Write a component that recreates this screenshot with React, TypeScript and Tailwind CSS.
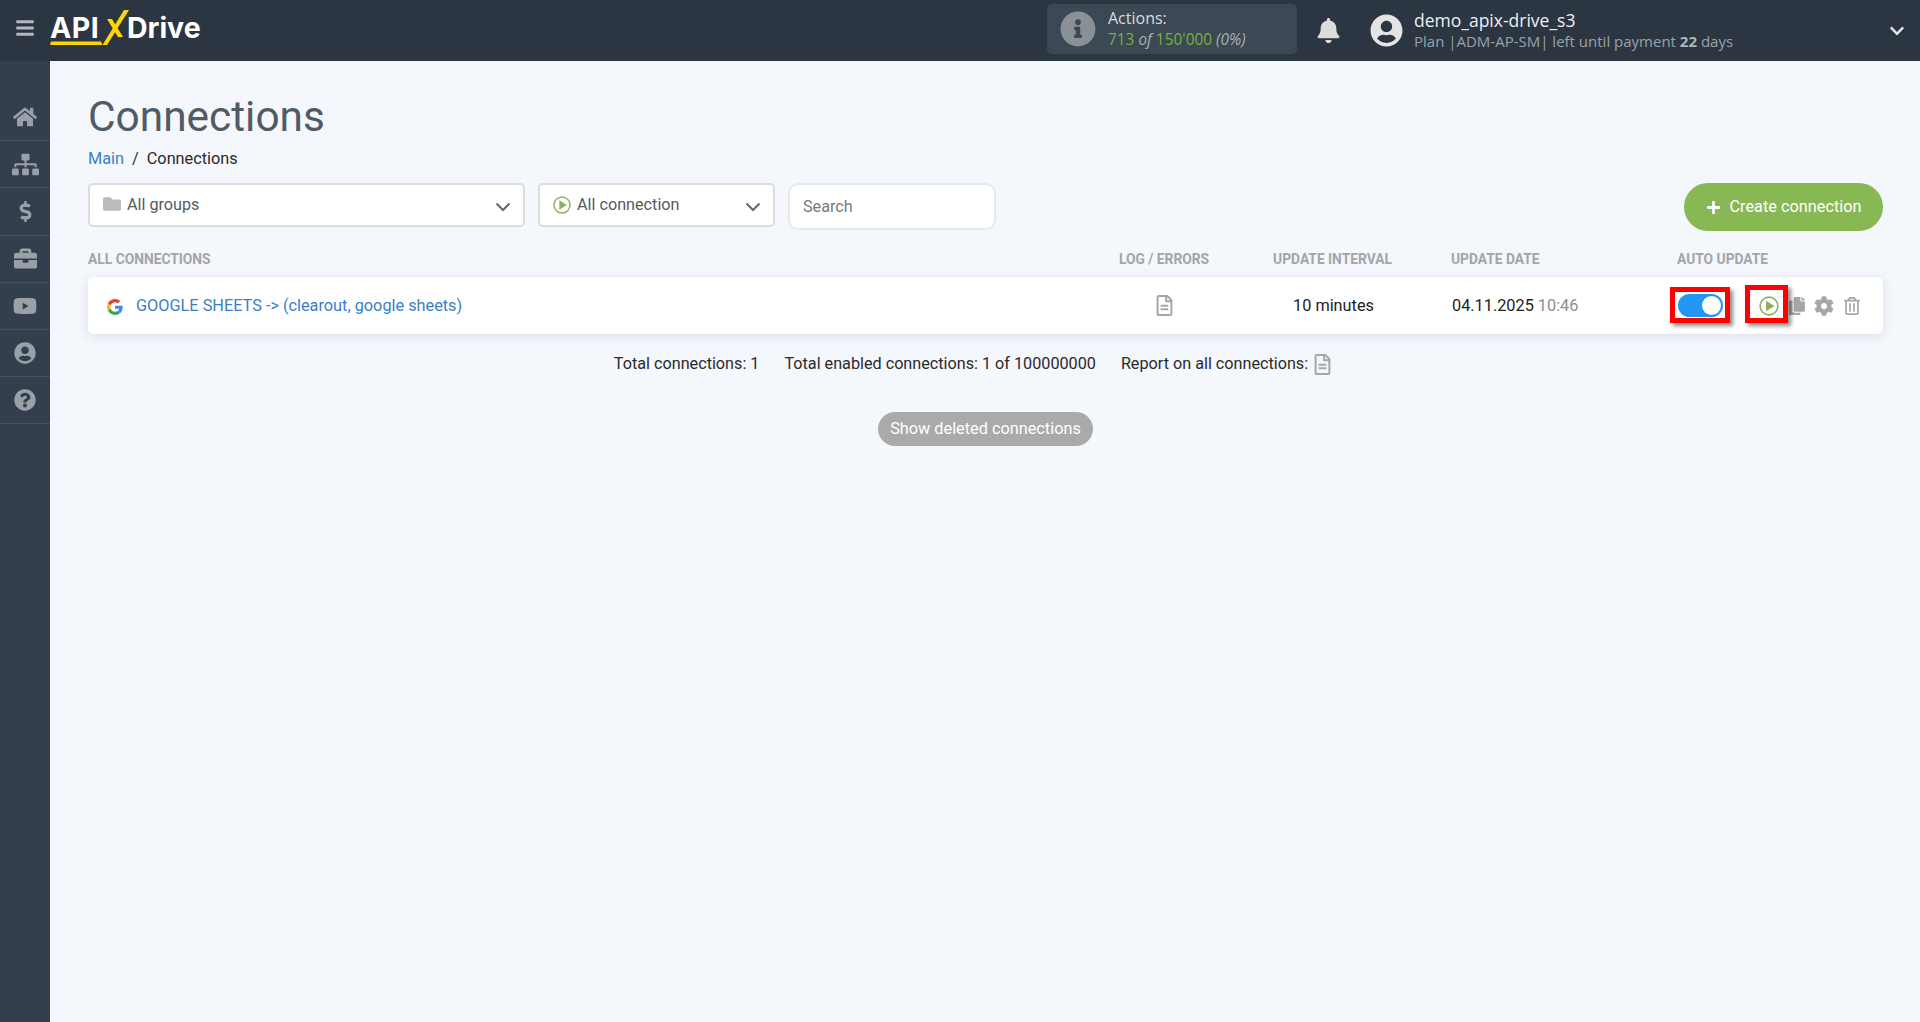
import React from "react";
import {
  FaBars,
  FaBell,
  FaBriefcase,
  FaChevronDown,
  FaCog,
  FaCopy,
  FaDollarSign,
  FaFolder,
  FaHome,
  FaInfoCircle,
  FaPlus,
  FaQuestionCircle,
  FaRegFileAlt,
  FaRegTrashAlt,
  FaSitemap,
  FaUserCircle,
  FaYoutube,
} from "react-icons/fa";

const columns = "grid grid-cols-[1030px_96px_236px_227px_206px] items-center";

const PlayIcon = ({ size }: { size: number }) => (
  <svg width={size} height={size} viewBox="0 0 20 20" className="shrink-0">
    <circle cx="10" cy="10" r="8.9" fill="none" stroke="#8fb05f" strokeWidth="1.6" />
    <path d="M7 4.800 15.500 10 7 15.200z" fill="#8fb05f" />
  </svg>
);

const GoogleIcon = () => (
  <svg width="16" height="16" viewBox="0 0 48 48" className="shrink-0">
    <path fill="#EA4335" d="M24 9.5c3.5 0 6.7 1.2 9.2 3.6l6.9-6.9C35.9 2.4 30.5 0 24 0 14.6 0 6.500 5.400 2.600 13.200l8 6.200C12.500 13.600 17.800 9.500 24 9.500z" />
    <path fill="#4285F4" d="M46.900 24.500c0-1.600-.1-3.100-.4-4.500H24v9h12.900c-.6 3-2.200 5.500-4.700 7.200l7.700 6c4.500-4.200 7-10.300 7-17.700z" />
    <path fill="#FBBC05" d="M10.600 28.600c-.5-1.400-.8-3-.8-4.600s.3-3.200.8-4.600l-8-6.200C.9 16.500 0 20.100 0 24s.9 7.500 2.600 10.800l8-6.200z" />
    <path fill="#34A853" d="M24 48c6.500 0 11.900-2.100 15.900-5.800l-7.700-6c-2.200 1.400-4.900 2.300-8.200 2.300-6.200 0-11.500-4.100-13.400-9.900l-8 6.200C6.500 42.600 14.600 48 24 48z" />
  </svg>
);

const Logo = () => (
  <div className="relative flex items-center h-[61px] w-[152px] pb-[4px] font-['Inter',sans-serif] font-bold text-white text-[28.5px]">
    <span className="w-[77px] tracking-[0.5px]">API</span>
    <span>Drive</span>
    <svg width="152" height="61" viewBox="0 0 152 61" className="absolute left-0 top-0">
      <path d="M74 10h5L57 45h-4.500z" fill="#ffd500" />
      <path d="M57 19h5l11 18h-5z" fill="#ffd500" />
      <path d="M1 41.500h50l1.500 3.500H0z" fill="#ffd500" />
    </svg>
  </div>
);

const Header = () => (
  <header className="h-[61px] shrink-0 bg-[#2c3643] flex items-center font-['Open_Sans',sans-serif]">
    <div className="w-[50px] flex justify-center mb-[5px]">
      <FaBars className="text-[#b4b8bc] text-[20px]" />
    </div>
    <Logo />
    <div className="ml-auto w-[250px] h-[50px] mb-[3px] rounded-[5px] bg-[#3c4853] flex items-center pl-[13px] gap-[12px]">
      <FaInfoCircle className="text-[#8a9196] text-[36px]" />
      <div className="leading-[21px]">
        <div className="text-[16px] text-[#d8dcdf]">Actions:</div>
        <div className="text-[15.4px] text-[#76b041]">
          713 <i className="text-[#a9afb3]">of</i> 150'000 <i className="text-[#a9afb3]">(0%)</i>
        </div>
      </div>
    </div>
    <FaBell className="ml-[19px] text-[#dcdcdc] text-[25px] mb-[1px]" />
    <FaUserCircle className="ml-[29px] text-[#e4e4e4] text-[33px]" />
    <div className="ml-[11px] w-[475px] leading-[21px]">
      <div className="text-[17.5px] text-[#eceeef]">demo_apix-drive_s3</div>
      <div className="text-[15px] text-[#9aa2a8]">
        Plan |ADM-AP-SM| left until payment <b className="text-[#b0b5ba]">22</b> days
      </div>
    </div>
    <FaChevronDown className="text-[#e4e4e4] text-[16px] mr-[15px]" />
  </header>
);

const sideIcons = [
  { Icon: FaHome, size: "text-[24px]" },
  { Icon: FaSitemap, size: "text-[27px]" },
  { Icon: FaDollarSign, size: "text-[21px]" },
  { Icon: FaBriefcase, size: "text-[23px]" },
  { Icon: FaYoutube, size: "text-[24px]" },
  { Icon: FaUserCircle, size: "text-[22px]" },
  { Icon: FaQuestionCircle, size: "text-[22px]" },
];

const Sidebar = () => (
  <aside className="w-[50px] shrink-0 bg-[#343f4e] pt-[33px]">
    {sideIcons.map(({ Icon, size }, i) => (
      <div key={i} className="h-[47.2px] flex items-center justify-center border-b border-[#465260]">
        <Icon className={`text-[#9aa0a7] ${size}`} />
      </div>
    ))}
  </aside>
);

const Select = ({ width, icon, label }: { width: string; icon: React.ReactNode; label: string }) => (
  <div className={`${width} h-[44px] bg-white border-2 border-[#dcdcdc] rounded-[5px] flex items-center pl-[13px] pr-[12px] gap-[6px] text-[16.2px] text-[#555b61]`}>
    {icon}
    <span>{label}</span>
    <svg width="16" height="10" viewBox="0 0 16 10" className="ml-auto mt-[4px]">
      <path d="M1.500 1.500 8 8l6.500-6.500" fill="none" stroke="#666" strokeWidth="2" />
    </svg>
  </div>
);

const Toolbar = () => (
  <div className="flex items-start">
    <Select width="w-[437px]" icon={<FaFolder className="text-[#bbbbbb] text-[18px] -mt-[3px]" />} label="All groups" />
    <div className="w-[13px]" />
    <Select width="w-[237px]" icon={<PlayIcon size={18} />} label="All connection" />
    <input
      placeholder="Search"
      className="ml-[13px] w-[208px] h-[47px] bg-white border-2 border-[#e6e8ec] rounded-[10px] px-[13px] text-[16.2px] placeholder:text-[#757b82] outline-none"
    />
    <button className="ml-auto h-[48px] w-[199px] rounded-full bg-[#88b853] text-white text-[16.3px] flex items-center justify-center gap-[9px]">
      <FaPlus className="text-[15px]" />
      Create connection
    </button>
  </div>
);

const Marked = ({ children, className }: { children: React.ReactNode; className: string }) => (
  <div className="relative flex items-center">
    {children}
    <span className={`absolute border-[5px] border-[#ff0000] shadow-[3px_3px_4px_rgba(0,0,0,0.45)] ${className}`} />
  </div>
);

const ConnectionRow = () => (
  <div className={`${columns} h-[57px] bg-white rounded-[6px] shadow-[0_2px_12px_rgba(40,60,90,0.12)]`}>
    <div className="flex items-center pl-[19px] gap-[13px] pt-[2px] text-[16.3px] text-[#3a80c6]">
      <GoogleIcon />
      GOOGLE SHEETS -&gt; (clearout, google sheets)
    </div>
    <div className="flex justify-center pr-[4px]">
      <FaRegFileAlt className="text-[#a6a6a6] text-[21px]" />
    </div>
    <div className="text-center pl-[3px] pt-[2px] text-[16.3px] text-[#222]">10 minutes</div>
    <div className="pl-[2px] pt-[2px] text-[16.3px] text-[#222]">
      04.11.2025 <span className="text-[#8d8d8d]">10:46</span>
    </div>
    <div className="flex items-center pl-[1px]">
      <Marked className="-left-[8px] -top-[7px] w-[60px] h-[36px]">
        <div className="w-[45px] h-[23px] rounded-full bg-[#2196f3] flex items-center justify-end pr-[2px]">
          <span className="w-[19px] h-[19px] rounded-full bg-white" />
        </div>
      </Marked>
      <div className="ml-[36px]">
        <Marked className="-left-[14px] -top-[10.5px] w-[43px] h-[38px]">
          <PlayIcon size={20} />
        </Marked>
      </div>
      <FaCopy className="ml-[9px] text-[#a6a6a6] text-[18px]" />
      <FaCog className="ml-[8px] text-[#a6a6a6] text-[20px]" />
      <FaRegTrashAlt className="ml-[9px] text-[#a6a6a6] text-[18px]" />
    </div>
  </div>
);

const Connections = () => (
  <main className="flex-1 pl-[38px] pr-[37px] pt-[31px]">
    <h1 className="text-[42.4px] leading-[50px] text-[#515b66]">Connections</h1>
    <div className="mt-[6px] h-[22px] flex items-center text-[16.3px]">
      <span className="text-[#3a80c6]">Main</span>
      <span className="mx-[8px] text-[#333]">/</span>
      <span className="text-[#2a2a2a]">Connections</span>
    </div>
    <div className="mt-[13px]">
      <Toolbar />
    </div>
    <div className={`${columns} mt-[18px] h-[20px] text-[13.8px] font-bold text-[#a3a5a8] uppercase`}>
      <span>All connections</span>
      <span className="text-center pr-[4px]">Log / Errors</span>
      <span className="text-center pl-[1px]">Update interval</span>
      <span className="pl-[1px]">Update date</span>
      <span>Auto update</span>
    </div>
    <div className="mt-[8px]">
      <ConnectionRow />
    </div>
    <div className="mt-[18px] flex items-center justify-center gap-[25px] pr-[24px] text-[16.2px] text-[#2a2a2a]">
      <span>Total connections: 1</span>
      <span>Total enabled connections: 1 of 100000000</span>
      <span className="flex items-center gap-[4px]">
        Report on all connections:
        <FaRegFileAlt className="text-[#a6a6a6] text-[21px]" />
      </span>
    </div>
    <div className="mt-[36px] flex justify-center">
      <button className="h-[34px] w-[215px] rounded-full bg-[#aaaaaa] text-white text-[16.3px]">
        Show deleted connections
      </button>
    </div>
  </main>
);

export default function App() {
  return (
    <div className="h-[1022px] flex flex-col bg-[#f4f7fc] font-['Roboto',sans-serif] overflow-hidden">
      <Header />
      <div className="flex flex-1">
        <Sidebar />
        <Connections />
      </div>
    </div>
  );
}
